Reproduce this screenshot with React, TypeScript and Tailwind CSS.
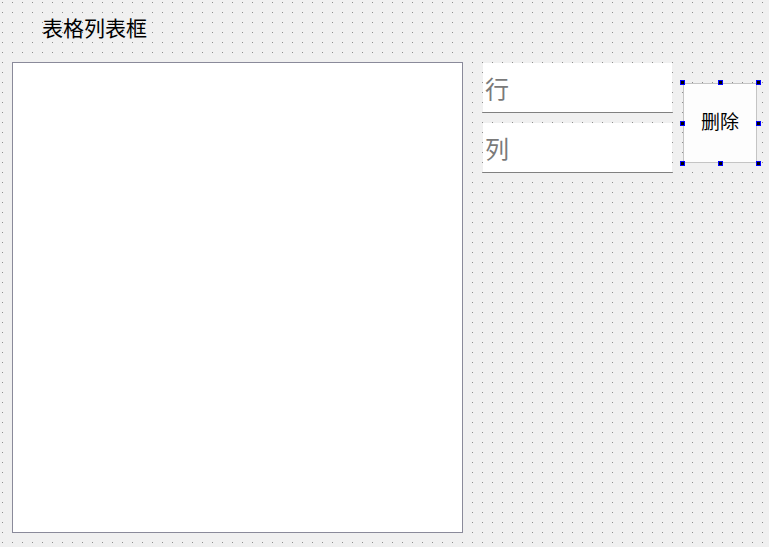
import React from 'react';

const cjk = "font-['Noto_Sans_CJK_SC','Noto_Sans',sans-serif]";

const Handle: React.FC = () => <span className="w-[5px] h-[5px] bg-black border border-[#0000ff]" />;

const App: React.FC = () => {
  return (
    <div
      className={`w-[769px] h-[547px] overflow-hidden bg-[#f0f0f0] bg-[radial-gradient(circle_at_2.5px_2.5px,#8e8e8e_0.6px,transparent_0.75px)] bg-[length:10px_10px] ${cjk}`}
    >
      <div className="pl-[42px] pt-[15px] h-[41px] text-[21px] leading-[24px] text-black">表格列表框</div>

      <div className="flex mt-[21px] pl-[12px]">
        <div className="w-[451px] h-[471px] bg-white border border-[#8a8a9a]" />

        <div className="ml-[20px] mt-[1px] flex flex-col gap-[10px] w-[189px]">
          <input
            placeholder="行"
            className="h-[50px] bg-white border-b border-[#808080] pl-[2px] text-[24px] outline-none placeholder:text-[#7a7a7a]"
          />
          <input
            placeholder="列"
            className="h-[50px] bg-white border-b border-[#808080] pl-[2px] text-[24px] outline-none placeholder:text-[#7a7a7a]"
          />
        </div>

        <div className="relative ml-[11px] mt-[21px] w-[74px] h-[80px]">
          <button className="w-full h-full pb-[3px] bg-[#fdfdfd] border border-[#c4c4c4] text-[19px] text-black">删除</button>
          {/* selection handles */}
          <div className="absolute -left-[3px] -right-[4px] -top-[3px] -bottom-[3px] flex flex-col justify-between pointer-events-none">
            <div className="flex justify-between">
              <Handle />
              <Handle />
              <Handle />
            </div>
            <div className="flex justify-between">
              <Handle />
              <Handle />
            </div>
            <div className="flex justify-between">
              <Handle />
              <Handle />
              <Handle />
            </div>
          </div>
        </div>
      </div>
    </div>
  );
};

export default App;
